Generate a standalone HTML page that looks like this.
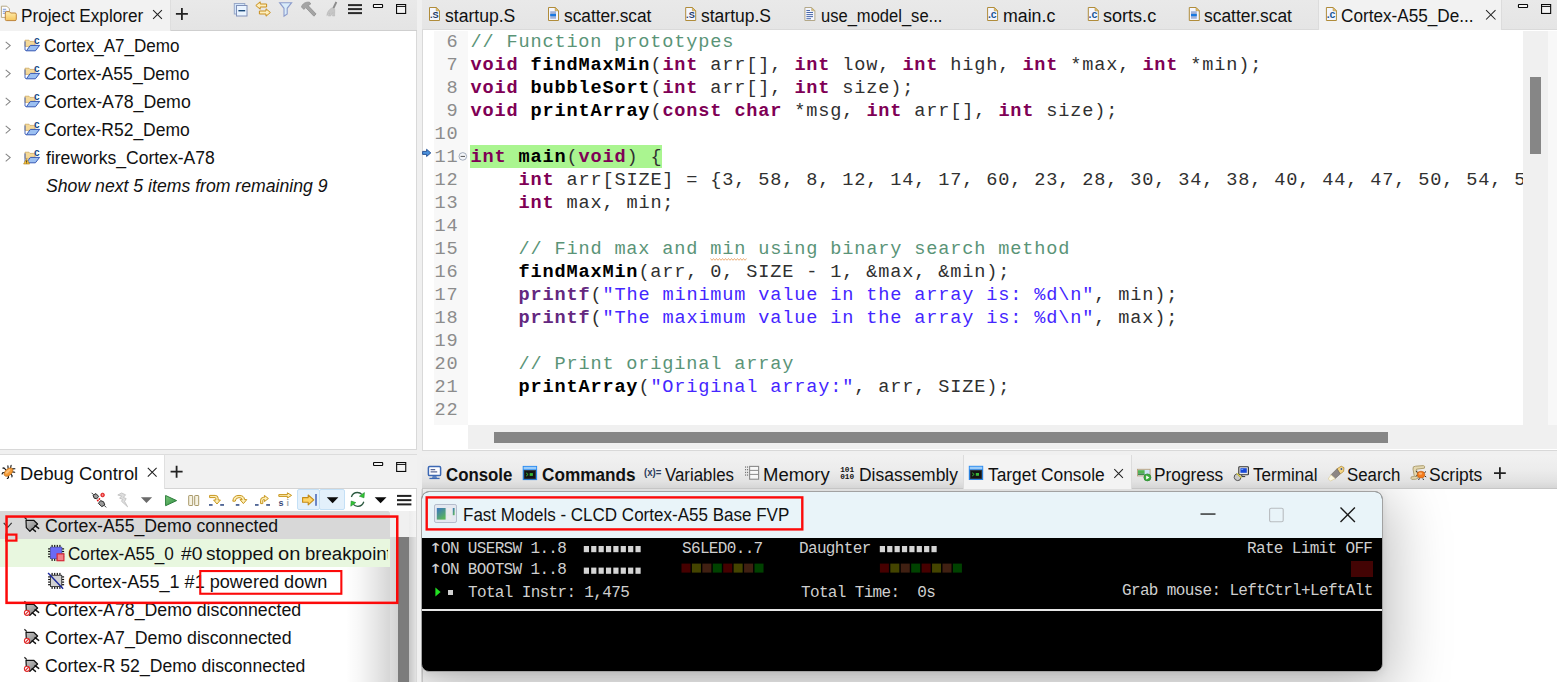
<!DOCTYPE html>
<html>
<head>
<meta charset="utf-8">
<title>IDE</title>
<style>
*{box-sizing:border-box;margin:0;padding:0}
html,body{width:1557px;height:682px;overflow:hidden;background:#f0f0f0}
body{position:relative;font-family:"Liberation Sans",sans-serif;color:#1a1a1a}
.abs{position:absolute}
.ui{position:absolute;white-space:nowrap;font-size:18px;line-height:22px;color:#111;transform-origin:0 50%;transform:scaleX(var(--k,1))}
.code{position:absolute;left:470.4px;white-space:pre;font-family:"Liberation Mono",monospace;font-size:18.6px;letter-spacing:0.84px;line-height:23px;height:23px;color:#303030;margin-top:0.5px}
.ln{position:absolute;left:422px;width:36.6px;text-align:right;white-space:pre;font-family:"Liberation Mono",monospace;font-size:18.6px;letter-spacing:0.84px;line-height:23px;height:23px;color:#8c8c8c;margin-top:0.5px}
.kw{color:#7f0055;font-weight:bold}
.fn{font-weight:bold;color:#000}
.cm{color:#5a9477}
.st{color:#4426ff}
.pf{color:#642880;font-weight:bold}
.lcd{position:absolute;white-space:pre;font-family:"Liberation Mono",monospace;font-size:16px;letter-spacing:-0.65px;line-height:17px;color:#cfcfcf}
.ar{position:absolute;left:-1.6px;top:-2.9px;width:8.95px;text-align:center;font-family:"DejaVu Sans Mono","Liberation Mono",monospace;font-size:17px;line-height:17px;letter-spacing:0;transform:scaleX(1.3)}
</style>
</head>
<body>

<!-- ============ LEFT TOP: Project Explorer ============ -->
<div class="abs" id="pe" style="left:0;top:0;width:417px;height:450px;background:#fff;border-right:1px solid #d9d9d9;border-bottom:1px solid #d8d8d8"></div>
<div class="abs" id="pe-bar" style="left:0;top:0;width:417px;height:31px;background:linear-gradient(180deg,#e9e9e9,#e4e4e4);border-bottom:1px solid #cfcfcf"></div>
<div class="abs" id="pe-tab" style="left:0;top:0;width:171px;height:31px;background:#f2f2f2;border-right:1px solid #dedede"></div>
<div class="ui" id="t-pe" style="left:21.24px;top:5px;--k:0.9554">Project Explorer</div>

<div class="ui" id="p1" style="left:44.48px;top:35px;--k:0.9473">Cortex_A7_Demo</div>
<div class="ui" id="p2" style="left:44.48px;top:63px;--k:0.9763">Cortex-A55_Demo</div>
<div class="ui" id="p3" style="left:44.49px;top:91px;--k:0.9844">Cortex-A78_Demo</div>
<div class="ui" id="p4" style="left:44.49px;top:119px;--k:0.9713">Cortex-R52_Demo</div>
<div class="ui" id="p5" style="left:45.50px;top:147px;--k:0.9750">fireworks_Cortex-A78</div>
<div class="ui" id="p6" style="left:45.50px;top:175px;font-style:italic;--k:0.9808">Show next 5 items from remaining 9</div>

<!-- ============ LEFT BOTTOM: Debug Control ============ -->
<div class="abs" id="dc" style="left:0;top:455px;width:417px;height:227px;background:#fff;border-right:1px solid #d9d9d9"></div>
<div class="abs" id="dc-bar" style="left:0;top:454px;width:417px;height:35px;background:#f1f1f1;border-bottom:1px solid #d4d4d4;border-top:1px solid #dcdcdc"></div>
<div class="abs" id="dc-tab" style="left:0;top:454px;width:165px;height:35px;background:#fff;border-right:1px solid #e0e0e0;border-top:1px solid #dcdcdc"></div>
<div class="ui" id="t-dc" style="left:20.09px;top:463px;--k:1.0178">Debug Control</div>

<div class="abs" id="d-shadow" style="left:346px;top:537px;width:44px;height:145px;background:linear-gradient(90deg,rgba(0,0,0,0) 0%,rgba(0,0,0,0.03) 30%,rgba(0,0,0,0.09) 65%,rgba(0,0,0,0.16) 100%)"></div>
<div class="abs" id="d-track1" style="left:389.8px;top:537px;width:9px;height:145px;background:linear-gradient(90deg,#dedede,#d2d2d2)"></div>
<div class="abs" id="d-track0" style="left:389.5px;top:511px;width:19.3px;height:26px;background:#f0f0f0"></div>
<div class="abs" id="d-thumb" style="left:398.4px;top:537px;width:10.4px;height:145px;background:#7c7c7c"></div>
<div class="abs" id="d-track" style="left:408.8px;top:511px;width:7.4px;height:171px;background:linear-gradient(90deg,#ececec,#f4f4f4)"></div>
<div class="abs" id="d-track2" style="left:408.8px;top:537px;width:7.4px;height:145px;background:linear-gradient(90deg,#c6c6c6,#e2e2e2)"></div>
<div class="abs" id="d-sel" style="left:0;top:511.3px;width:389.8px;height:27.5px;background:#d8d8d8;border-radius:0 2px 2px 0"></div>
<div class="abs" id="d-grn" style="left:0;top:539px;width:389.5px;height:27.8px;background:#e8f7df"></div>
<div class="ui" id="d1" style="left:44.80px;top:515px;--k:0.9830">Cortex-A55_Demo connected</div>
<div class="abs" id="d2clip" style="left:0;top:539px;width:388.2px;height:28px;overflow:hidden"><div class="ui" id="d2a" style="left:68.45px;top:4px;--k:0.9519">Cortex-A55_0</div><div class="ui" id="d2b" style="left:180.72px;top:4px;--k:1.0713">#0</div><div class="ui" id="d2c" style="left:206.14px;top:4px;--k:1.0566">stopped</div><div class="ui" id="d2d" style="left:278.38px;top:4px;--k:1.1174">on</div><div class="ui" id="d2e" style="left:304.7px;top:4px;--k:1.032">breakpoint</div></div>
<div class="ui" id="d3" style="left:68.49px;top:571px;--k:1.0044">Cortex-A55_1 #1 powered down</div>
<div class="ui" id="d4" style="left:44.80px;top:599px;--k:0.9849">Cortex-A78_Demo disconnected</div>
<div class="ui" id="d5" style="left:44.80px;top:627px;--k:0.9859">Cortex-A7_Demo disconnected</div>
<div class="ui" id="d6" style="left:44.80px;top:655px;--k:0.9778">Cortex-R 52_Demo disconnected</div>

<!-- ============ EDITOR ============ -->
<div class="abs" id="ed" style="left:422px;top:0;width:1135px;height:451px;background:#fff;border-left:1px solid #d9d9d9;border-bottom:1px solid #d8d8d8"></div>
<div class="abs" id="ed-bar" style="left:422px;top:0;width:1135px;height:30px;background:linear-gradient(180deg,#e9e9e9,#e5e5e5);border-bottom:1px solid #dadada"></div>
<div class="abs" id="ed-tab" style="left:1318px;top:0;width:184px;height:30px;background:#f2f2f2;border-left:1px solid #dcdcdc;border-right:1px solid #dcdcdc"></div>


<div class="ui" id="e1" style="left:444.56px;top:5px;--k:0.9765">startup.S</div>
<div class="ui" id="e2" style="left:563.59px;top:5px;--k:0.9602">scatter.scat</div>
<div class="ui" id="e3" style="left:700.96px;top:5px;--k:0.9710">startup.S</div>
<div class="ui" id="e4" style="left:820.55px;top:5px;--k:0.9190">use_model_se...</div>
<div class="ui" id="e5" style="left:1003.30px;top:5px;--k:0.9866">main.c</div>
<div class="ui" id="e6" style="left:1103.16px;top:5px;--k:1.0029">sorts.c</div>
<div class="ui" id="e7" style="left:1204.17px;top:5px;--k:0.9659">scatter.scat</div>
<div class="ui" id="e8" style="left:1341.48px;top:5px;--k:0.9531">Cortex-A55_De...</div>

<!-- gutter + scrollbars -->
<div class="abs" id="gut" style="left:434px;top:31px;width:34px;height:394px;background:#f8f8f8"></div>
<div class="abs" id="vtrack" style="left:1523px;top:31px;width:25px;height:394px;background:#f0f0f0"></div>
<div class="abs" id="vright" style="left:1548px;top:31px;width:9px;height:394px;background:#f8f8f8"></div>
<div class="abs" id="vthumb" style="left:1530px;top:77px;width:11px;height:77px;background:#868686"></div>
<div class="abs" id="htrack" style="left:468px;top:425px;width:1089px;height:24px;background:#f0f0f0"></div>
<div class="abs" id="hthumb" style="left:494px;top:432px;width:894px;height:11px;background:#868686"></div>
<div class="abs" id="hl" style="left:470px;top:145px;width:192px;height:23px;background:#aaf590"></div>
<div class="abs" id="codeclip" style="left:0;top:30px;width:1523px;height:395px;overflow:hidden">
<div class="ln" style="top:0px">6</div><div class="code" style="top:0px"><span class="cm">// Function prototypes</span></div>
<div class="ln" style="top:23px">7</div><div class="code" style="top:23px"><span class="kw">void</span> <span class="fn">findMaxMin</span>(<span class="kw">int</span> arr[], <span class="kw">int</span> low, <span class="kw">int</span> high, <span class="kw">int</span> *max, <span class="kw">int</span> *min);</div>
<div class="ln" style="top:46px">8</div><div class="code" style="top:46px"><span class="kw">void</span> <span class="fn">bubbleSort</span>(<span class="kw">int</span> arr[], <span class="kw">int</span> size);</div>
<div class="ln" style="top:69px">9</div><div class="code" style="top:69px"><span class="kw">void</span> <span class="fn">printArray</span>(<span class="kw">const</span> <span class="kw">char</span> *msg, <span class="kw">int</span> arr[], <span class="kw">int</span> size);</div>
<div class="ln" style="top:92px">10</div>
<div class="ln" style="top:115px">11</div><div class="code" style="top:115px"><span class="kw">int</span> <span class="fn">main</span>(<span class="kw">void</span>) {</div>
<div class="ln" style="top:138px">12</div><div class="code" style="top:138px">    <span class="kw">int</span> arr[SIZE] = {3, 58, 8, 12, 14, 17, 60, 23, 28, 30, 34, 38, 40, 44, 47, 50, 54, 57,</div>
<div class="ln" style="top:161px">13</div><div class="code" style="top:161px">    <span class="kw">int</span> max, min;</div>
<div class="ln" style="top:184px">14</div>
<div class="ln" style="top:207px">15</div><div class="code" style="top:207px">    <span class="cm">// Find max and min using binary search method</span></div>
<div class="ln" style="top:230px">16</div><div class="code" style="top:230px">    <span class="fn">findMaxMin</span>(arr, 0, SIZE - 1, &amp;max, &amp;min);</div>
<div class="ln" style="top:253px">17</div><div class="code" style="top:253px">    <span class="pf">printf</span>(<span class="st">"The minimum value in the array is: %d\n"</span>, min);</div>
<div class="ln" style="top:276px">18</div><div class="code" style="top:276px">    <span class="pf">printf</span>(<span class="st">"The maximum value in the array is: %d\n"</span>, max);</div>
<div class="ln" style="top:299px">19</div>
<div class="ln" style="top:322px">20</div><div class="code" style="top:322px">    <span class="cm">// Print original array</span></div>
<div class="ln" style="top:345px">21</div><div class="code" style="top:345px">    <span class="fn">printArray</span>(<span class="st">"Original array:"</span>, arr, SIZE);</div>
<div class="ln" style="top:368px">22</div>
</div>

<!-- ============ BOTTOM RIGHT ============ -->
<div class="abs" id="bt" style="left:422px;top:455px;width:1135px;height:227px;background:#fff;border-left:1px solid #d9d9d9"></div>
<div class="abs" id="bt-bar" style="left:422px;top:455px;width:1135px;height:34px;background:linear-gradient(180deg,#f1f1f1 0%,#ececec 45%,#e2e2e2 80%,#d6d6d6 100%);border-bottom:1px solid #c6c6c6"></div>


<div class="abs" id="bt-tab" style="left:963.4px;top:455px;width:168.4px;height:34px;background:#f3f3f3;border-left:1px solid #dcdcdc;border-right:1px solid #dcdcdc"></div>
<div class="ui" id="b1" style="left:445.60px;top:464px;font-weight:bold;--k:0.9352">Console</div>
<div class="ui" id="b2" style="left:542.00px;top:464px;font-weight:bold;--k:0.9552">Commands</div>
<div class="ui" id="b3" style="left:665.29px;top:464px;--k:0.9349">Variables</div>
<div class="ui" id="b4" style="left:762.88px;top:464px;--k:1.0267">Memory</div>
<div class="ui" id="b5" style="left:859.33px;top:464px;--k:0.9701">Disassembly</div>
<div class="ui" id="b6" style="left:987.90px;top:464px;--k:0.9638">Target Console</div>
<div class="ui" id="b7" style="left:1153.93px;top:464px;--k:0.9618">Progress</div>
<div class="ui" id="b8" style="left:1252.90px;top:464px;--k:0.9506">Terminal</div>
<div class="ui" id="b9" style="left:1346.59px;top:464px;--k:0.9359">Search</div>
<div class="ui" id="b10" style="left:1428.98px;top:464px;--k:0.9683">Scripts</div>

<!-- Fast Models window -->
<div class="abs" id="fm-shclip" style="left:421px;top:489px;width:1136px;height:193px;overflow:hidden"><div class="abs" style="left:0px;top:2.4px;width:962px;height:181px;border-radius:8px;box-shadow:0 14px 60px 8px rgba(0,0,0,0.27),0 2px 8px rgba(0,0,0,0.08)"></div></div>
<div class="abs" id="fm" style="left:421px;top:491.4px;width:962px;height:181px;border-radius:8px;background:#000;overflow:hidden;border:1px solid #a2a2a2">
  <div class="abs" id="fm-title" style="left:-1px;top:-1px;width:963px;height:46.6px;background:#e9f4f9"></div>
  <div class="abs" id="fm-line" style="left:-1px;top:116.2px;width:963px;height:2.2px;background:#e6e6e6"></div>
</div>
<div class="ui" id="fmt" style="left:463.36px;top:504.2px;--k:0.9454">Fast Models - CLCD Cortex-A55 Base FVP</div>

<div class="lcd" id="l1" style="left:432px;padding-left:8.95px;top:540.6px"><span class="ar">↑</span>ON USERSW 1..8</div>
<div class="lcd" id="l2" style="left:432px;padding-left:8.95px;top:561.7px"><span class="ar">↑</span>ON BOOTSW 1..8</div>
<div class="lcd" id="l3" style="left:468px;top:584.6px">Total Instr: 1,475</div>
<div class="lcd" id="l4" style="left:682px;top:540.6px">S6LED0..7</div>
<div class="lcd" id="l5" style="left:799px;top:540.6px">Daughter</div>
<div class="lcd" id="l6" style="left:801px;top:584.6px">Total Time:  0s</div>
<div class="lcd" id="l7" style="left:1247px;top:540.6px">Rate Limit OFF</div>
<div class="lcd" id="l8" style="left:1122px;top:582.6px">Grab mouse: LeftCtrl+LeftAlt</div>

<!--ICONS-->
<svg class="abs" style="left:429px;top:7px;overflow:visible" width="12" height="15" viewBox="0 0 12 15" ><path d="M0.5,0.5H7.2L10.5,3.8V13.5H0.5Z" fill="#f3f6ff" stroke="#b08c3a"/><path d="M7.2,0.5V3.8H10.5Z" fill="#e6c46e" stroke="#b08c3a" stroke-width="0.6"/><text x="0.9" y="11.4" font-family="Liberation Sans,sans-serif" font-weight="bold" font-size="9.2" fill="#1c3a68">.S</text></svg>
<svg class="abs" style="left:548px;top:7px;overflow:visible" width="12" height="15" viewBox="0 0 12 15" ><path d="M0.5,0.5H7.2L10.5,3.8V13.5H0.5Z" fill="#f3f6ff" stroke="#b08c3a"/><path d="M7.2,0.5V3.8H10.5Z" fill="#e6c46e" stroke="#b08c3a" stroke-width="0.6"/><rect x="2.2" y="4.2" width="5.8" height="7.6" fill="#a3b2d8"/><rect x="2.2" y="6.9" width="5.8" height="2.3" fill="#1878e0"/></svg>
<svg class="abs" style="left:685px;top:7px;overflow:visible" width="12" height="15" viewBox="0 0 12 15" ><g transform="translate(0.2,0)"><path d="M0.5,0.5H7.2L10.5,3.8V13.5H0.5Z" fill="#f3f6ff" stroke="#b08c3a"/><path d="M7.2,0.5V3.8H10.5Z" fill="#e6c46e" stroke="#b08c3a" stroke-width="0.6"/><text x="0.9" y="11.4" font-family="Liberation Sans,sans-serif" font-weight="bold" font-size="9.2" fill="#1c3a68">.S</text></g></svg>
<svg class="abs" style="left:804px;top:7px;overflow:visible" width="12" height="15" viewBox="0 0 12 15" ><g transform="translate(0.4,0)"><path d="M0.5,0.5H7.2L10.5,3.8V13.5H0.5Z" fill="#f3f6ff" stroke="#b4a888"/><path d="M7.2,0.5V3.8H10.5Z" fill="#dcc070" stroke="#b4a888" stroke-width="0.6"/><rect x="2" y="3" width="3.6" height="1" fill="#4a68a8"/><rect x="2" y="5" width="6.6" height="1" fill="#4a68a8"/><rect x="2" y="7.1" width="6.6" height="1" fill="#4a68a8"/><rect x="2" y="9.1" width="6.6" height="1" fill="#4a68a8"/><rect x="2" y="11.2" width="4.6" height="1" fill="#4a68a8"/></g></svg>
<svg class="abs" style="left:987px;top:7px;overflow:visible" width="12" height="15" viewBox="0 0 12 15" ><g transform="translate(0.1,0)"><path d="M0.5,0.5H7.2L10.5,3.8V13.5H0.5Z" fill="#f3f6ff" stroke="#b08c3a"/><path d="M7.2,0.5V3.8H10.5Z" fill="#e6c46e" stroke="#b08c3a" stroke-width="0.6"/><text x="0.8" y="11.2" font-family="Liberation Sans,sans-serif" font-weight="bold" font-size="10.5" fill="#1d5896">.c</text></g></svg>
<svg class="abs" style="left:1087px;top:7px;overflow:visible" width="12" height="15" viewBox="0 0 12 15" ><g transform="translate(0.8,0)"><path d="M0.5,0.5H7.2L10.5,3.8V13.5H0.5Z" fill="#f3f6ff" stroke="#b08c3a"/><path d="M7.2,0.5V3.8H10.5Z" fill="#e6c46e" stroke="#b08c3a" stroke-width="0.6"/><text x="0.8" y="11.2" font-family="Liberation Sans,sans-serif" font-weight="bold" font-size="10.5" fill="#1d5896">.c</text></g></svg>
<svg class="abs" style="left:1188px;top:7px;overflow:visible" width="12" height="15" viewBox="0 0 12 15" ><g transform="translate(0.8,0)"><path d="M0.5,0.5H7.2L10.5,3.8V13.5H0.5Z" fill="#f3f6ff" stroke="#b08c3a"/><path d="M7.2,0.5V3.8H10.5Z" fill="#e6c46e" stroke="#b08c3a" stroke-width="0.6"/><rect x="2.2" y="4.2" width="5.8" height="7.6" fill="#a3b2d8"/><rect x="2.2" y="6.9" width="5.8" height="2.3" fill="#1878e0"/></g></svg>
<svg class="abs" style="left:1325px;top:7px;overflow:visible" width="12" height="15" viewBox="0 0 12 15" ><g transform="translate(0.9,0)"><path d="M0.5,0.5H7.2L10.5,3.8V13.5H0.5Z" fill="#f3f6ff" stroke="#b08c3a"/><path d="M7.2,0.5V3.8H10.5Z" fill="#e6c46e" stroke="#b08c3a" stroke-width="0.6"/><text x="0.8" y="11.2" font-family="Liberation Sans,sans-serif" font-weight="bold" font-size="10.5" fill="#1d5896">.c</text></g></svg>
<svg class="abs" style="left:152px;top:9px;overflow:visible" width="11" height="11" viewBox="0 0 11 11" ><g transform="translate(0.8,0.8)"><path d="M0.3,0.3L9.1,9.1M9.1,0.3L0.3,9.1" stroke="#222" stroke-width="1.05" fill="none"/></g></svg>
<svg class="abs" style="left:175px;top:7px;overflow:visible" width="13" height="13" viewBox="0 0 13 13" ><g transform="translate(0.9,0.9)"><path d="M6.0,0V12M0,6.0H12" stroke="#222" stroke-width="1.8" fill="none"/></g></svg>
<svg class="abs" style="left:147px;top:467px;overflow:visible" width="10" height="11" viewBox="0 0 10 11" ><g transform="translate(0.5,0.6)"><path d="M0.3,0.3L9.1,9.1M9.1,0.3L0.3,9.1" stroke="#222" stroke-width="1.05" fill="none"/></g></svg>
<svg class="abs" style="left:170px;top:465px;overflow:visible" width="13" height="13" viewBox="0 0 13 13" ><g transform="translate(0.6,0.7)"><path d="M6.0,0V12M0,6.0H12" stroke="#222" stroke-width="1.8" fill="none"/></g></svg>
<svg class="abs" style="left:1485px;top:9px;overflow:visible" width="11" height="11" viewBox="0 0 11 11" ><g transform="translate(0.8,0.8)"><path d="M0.3,0.3L9.7,9.7M9.7,0.3L0.3,9.7" stroke="#222" stroke-width="1.05" fill="none"/></g></svg>
<svg class="abs" style="left:1114px;top:468px;overflow:visible" width="10" height="11" viewBox="0 0 10 11" ><g transform="translate(0,0.9)"><path d="M0.3,0.3L8.899999999999999,8.899999999999999M8.899999999999999,0.3L0.3,8.899999999999999" stroke="#222" stroke-width="1.05" fill="none"/></g></svg>
<svg class="abs" style="left:1494px;top:467px;overflow:visible" width="12" height="13" viewBox="0 0 12 13" ><g transform="translate(0,0.2)"><path d="M5.9,0V11.8M0,5.9H11.8" stroke="#222" stroke-width="1.8" fill="none"/></g></svg>
<svg class="abs" style="left:372px;top:4px;overflow:visible" width="12" height="5" viewBox="0 0 12 5" ><g transform="translate(0.9,0)"><rect x="0.55" y="0.55" width="9.1" height="2.9" rx="0.5" fill="#f4f4f4" stroke="#0a0a0a" stroke-width="1.1"/></g></svg>
<svg class="abs" style="left:396px;top:4px;overflow:visible" width="11" height="11" viewBox="0 0 11 11" ><rect x="0.55" y="0.55" width="9.1" height="8.9" fill="#f4f4f4" stroke="#0a0a0a" stroke-width="1.1"/><rect x="0.5" y="2" width="9.2" height="0.9" fill="#0a0a0a"/></svg>
<svg class="abs" style="left:373px;top:462px;overflow:visible" width="11" height="5" viewBox="0 0 11 5" ><rect x="0.55" y="0.55" width="9.1" height="2.9" rx="0.5" fill="#f4f4f4" stroke="#0a0a0a" stroke-width="1.1"/></svg>
<svg class="abs" style="left:396px;top:462px;overflow:visible" width="11" height="11" viewBox="0 0 11 11" ><g transform="translate(0.1,0)"><rect x="0.55" y="0.55" width="9.1" height="8.9" fill="#f4f4f4" stroke="#0a0a0a" stroke-width="1.1"/><rect x="0.5" y="2" width="9.2" height="0.9" fill="#0a0a0a"/></g></svg>
<svg class="abs" style="left:1517px;top:4px;overflow:visible" width="12" height="5" viewBox="0 0 12 5" ><g transform="translate(0.9,0)"><rect x="0.55" y="0.55" width="9.1" height="2.9" rx="0.5" fill="#f4f4f4" stroke="#0a0a0a" stroke-width="1.1"/></g></svg>
<svg class="abs" style="left:1541px;top:4px;overflow:visible" width="11" height="11" viewBox="0 0 11 11" ><rect x="0.55" y="0.55" width="9.1" height="8.9" fill="#f4f4f4" stroke="#0a0a0a" stroke-width="1.1"/><rect x="0.5" y="2" width="9.2" height="0.9" fill="#0a0a0a"/></svg>
<svg class="abs" style="left:233px;top:3px;overflow:visible" width="15" height="14" viewBox="0 0 15 14" ><g transform="translate(0.8,0)"><rect x="0.5" y="0.5" width="10.5" height="10.5" fill="#d4e6fa" stroke="#98a8c8"/><rect x="2.7" y="2.5" width="10.5" height="10.5" fill="#eaf4ff" stroke="#8090b8"/><rect x="4.6" y="7" width="6.8" height="1.4" fill="#1a4a7a"/></g></svg>
<svg class="abs" style="left:255px;top:1px;overflow:visible" width="17" height="17" viewBox="0 0 17 17" ><path d="M0.8,4.5L5.2,0.8V3H11.6V6H5.2V8.2Z" fill="#fdeebc" stroke="#c98f1e" stroke-width="1"/><path d="M15.4,11.5L11,7.8V10H4.4V13H11V15.2Z" fill="#fdeebc" stroke="#c98f1e" stroke-width="1"/></svg>
<svg class="abs" style="left:279px;top:2px;overflow:visible" width="15" height="16" viewBox="0 0 15 16" ><path d="M0.6,0.7H12.6L8.2,6.3V12L5,14.2V6.3Z" fill="#d9ecfa" stroke="#8c9ccc" stroke-width="1.1"/></svg>
<svg class="abs" style="left:300px;top:1px;overflow:visible" width="18" height="17" viewBox="0 0 18 17" ><g transform="translate(0.5,0)"><path d="M1,6C2,2.5 5,0.8 9,1.2L10.2,3L7.6,4.6L15.6,13L13.4,15.2L5.2,6.6L3.4,8.4Z" fill="#a4a4a4" stroke="#8e8e8e" stroke-width="0.8"/></g></svg>
<svg class="abs" style="left:326px;top:1px;overflow:visible" width="13" height="17" viewBox="0 0 13 17" ><path d="M9.5,0.6L11.2,1.6L8.2,7.8L6.4,7Z" fill="#8c8c8c"/><path d="M5.8,7L8.8,8.4L8.6,15H6.6L6.8,11.5L4.6,15H2.4L3.8,12L0.8,14.6C1.2,10.8 3.2,8.2 5.8,7Z" fill="#c6c6c6" stroke="#b0b0b0" stroke-width="0.5"/></svg>
<svg class="abs" style="left:348px;top:4px;overflow:visible" width="15" height="11" viewBox="0 0 15 11" ><g transform="translate(0,0.1)"><rect x="0" y="0.0" width="14" height="2" fill="#2a2a2a"/><rect x="0" y="4.0" width="14" height="2" fill="#2a2a2a"/><rect x="0" y="8.0" width="14" height="2" fill="#2a2a2a"/></g></svg>
<svg class="abs" style="left:0px;top:5px;overflow:visible" width="17" height="17" viewBox="0 0 17 17" ><g transform="translate(0.8,0.6)"><path d="M0.6,0.6H6L8.6,3.2V11.8H0.6Z" fill="#fdfdff" stroke="#b0a078" stroke-width="0.9"/><rect x="2" y="3.2" width="3.4" height="0.9" fill="#6a8ad0"/><rect x="2" y="5.2" width="4.6" height="0.9" fill="#6a8ad0"/><rect x="2" y="7.2" width="3" height="0.9" fill="#6a8ad0"/><defs><linearGradient id="gfo" x1="0" y1="0" x2="0" y2="1"><stop offset="0" stop-color="#ffeeb0"/><stop offset="1" stop-color="#f6c65e"/></linearGradient></defs><path d="M4.5,7.4Q4.5,6 5.8,6H8.6L9.8,7.4H14.2Q15.5,7.4 15.5,8.6V13.8Q15.5,15 14.2,15H5.8Q4.5,15 4.5,13.8Z" fill="url(#gfo)" stroke="#b87a2e" stroke-width="0.9"/></g></svg>
<svg class="abs" style="left:5px;top:41px;overflow:visible" width="7" height="9" viewBox="0 0 7 9" ><g transform="translate(0.2,0.4)"><path d="M0.5,0.4L5,4.2L0.5,8" fill="none" stroke="#858585" stroke-width="1.05"/></g></svg>
<svg class="abs" style="left:24px;top:38px;overflow:visible" width="17" height="15" viewBox="0 0 17 15" ><g transform="translate(0,0.4)"><path d="M1,1.8H5L6,3H11V8H1Z" fill="#f5d998" stroke="#c8a45a" stroke-width="0.7"/><path d="M2.4,12.4H11.4L15.6,7H6.4Z" fill="#9cc0f2" stroke="#3558b4" stroke-width="1" stroke-linejoin="round"/><path d="M1,3V11.6L2.4,12.4" fill="none" stroke="#3558b4" stroke-width="0.9"/><text x="9.9" y="5.8" font-family="Liberation Sans,sans-serif" font-weight="bold" font-size="10" fill="#174a86">c</text></g></svg>
<svg class="abs" style="left:5px;top:69px;overflow:visible" width="7" height="9" viewBox="0 0 7 9" ><g transform="translate(0.2,0.4)"><path d="M0.5,0.4L5,4.2L0.5,8" fill="none" stroke="#858585" stroke-width="1.05"/></g></svg>
<svg class="abs" style="left:24px;top:66px;overflow:visible" width="17" height="15" viewBox="0 0 17 15" ><g transform="translate(0,0.4)"><path d="M1,1.8H5L6,3H11V8H1Z" fill="#f5d998" stroke="#c8a45a" stroke-width="0.7"/><path d="M2.4,12.4H11.4L15.6,7H6.4Z" fill="#9cc0f2" stroke="#3558b4" stroke-width="1" stroke-linejoin="round"/><path d="M1,3V11.6L2.4,12.4" fill="none" stroke="#3558b4" stroke-width="0.9"/><text x="9.9" y="5.8" font-family="Liberation Sans,sans-serif" font-weight="bold" font-size="10" fill="#174a86">c</text></g></svg>
<svg class="abs" style="left:5px;top:97px;overflow:visible" width="7" height="9" viewBox="0 0 7 9" ><g transform="translate(0.2,0.4)"><path d="M0.5,0.4L5,4.2L0.5,8" fill="none" stroke="#858585" stroke-width="1.05"/></g></svg>
<svg class="abs" style="left:24px;top:94px;overflow:visible" width="17" height="15" viewBox="0 0 17 15" ><g transform="translate(0,0.4)"><path d="M1,1.8H5L6,3H11V8H1Z" fill="#f5d998" stroke="#c8a45a" stroke-width="0.7"/><path d="M2.4,12.4H11.4L15.6,7H6.4Z" fill="#9cc0f2" stroke="#3558b4" stroke-width="1" stroke-linejoin="round"/><path d="M1,3V11.6L2.4,12.4" fill="none" stroke="#3558b4" stroke-width="0.9"/><text x="9.9" y="5.8" font-family="Liberation Sans,sans-serif" font-weight="bold" font-size="10" fill="#174a86">c</text></g></svg>
<svg class="abs" style="left:5px;top:125px;overflow:visible" width="7" height="9" viewBox="0 0 7 9" ><g transform="translate(0.2,0.4)"><path d="M0.5,0.4L5,4.2L0.5,8" fill="none" stroke="#858585" stroke-width="1.05"/></g></svg>
<svg class="abs" style="left:24px;top:122px;overflow:visible" width="17" height="15" viewBox="0 0 17 15" ><g transform="translate(0,0.4)"><path d="M1,1.8H5L6,3H11V8H1Z" fill="#f5d998" stroke="#c8a45a" stroke-width="0.7"/><path d="M2.4,12.4H11.4L15.6,7H6.4Z" fill="#9cc0f2" stroke="#3558b4" stroke-width="1" stroke-linejoin="round"/><path d="M1,3V11.6L2.4,12.4" fill="none" stroke="#3558b4" stroke-width="0.9"/><text x="9.9" y="5.8" font-family="Liberation Sans,sans-serif" font-weight="bold" font-size="10" fill="#174a86">c</text></g></svg>
<svg class="abs" style="left:5px;top:153px;overflow:visible" width="7" height="9" viewBox="0 0 7 9" ><g transform="translate(0.2,0.4)"><path d="M0.5,0.4L5,4.2L0.5,8" fill="none" stroke="#858585" stroke-width="1.05"/></g></svg>
<svg class="abs" style="left:24px;top:150px;overflow:visible" width="17" height="15" viewBox="0 0 17 15" ><g transform="translate(0,0.4)"><path d="M1,1.8H5L6,3H11V8H1Z" fill="#f5d998" stroke="#c8a45a" stroke-width="0.7"/><path d="M2.4,12.4H11.4L15.6,7H6.4Z" fill="#9cc0f2" stroke="#3558b4" stroke-width="1" stroke-linejoin="round"/><path d="M1,3V11.6L2.4,12.4" fill="none" stroke="#3558b4" stroke-width="0.9"/><text x="9.9" y="5.8" font-family="Liberation Sans,sans-serif" font-weight="bold" font-size="10" fill="#174a86">c</text><path d="M2.6,8.2L5.6,13.6H-0.4Z" fill="#f6c23a" stroke="#a87818" stroke-width="0.6"/><rect x="2.25" y="10" width="0.8" height="2" fill="#222"/><rect x="2.25" y="12.3" width="0.8" height="0.7" fill="#222"/></g></svg>
<svg class="abs" style="left:1px;top:464px;overflow:visible" width="16" height="16" viewBox="0 0 16 16" ><g transform="translate(0.5,0.5)"><g stroke="#111" stroke-width="1.1" fill="none" stroke-linecap="round"><path d="M6.6,3.6L6.4,1.2M9.2,3L9.6,0.8M10.8,4.4L13.4,4.2M11,7.4L13.2,7.8M4.4,5.4L2.4,3.4L1.4,3.6M3.4,8L1.2,8.2L0.6,9.4M6.8,11.4L7,13.2L5.8,14M9.4,9.6L10.6,11.2L10.4,12.4"/></g><ellipse cx="7" cy="7.6" rx="5.2" ry="3.1" transform="rotate(-42 7 7.6)" fill="#f59a34" stroke="#b86a18" stroke-width="0.7"/><ellipse cx="6.4" cy="6.8" rx="3.2" ry="1.2" transform="rotate(-42 6.4 6.8)" fill="#fbc888" opacity="0.8"/></g></svg>
<svg class="abs" style="left:91px;top:492px;overflow:visible" width="17" height="17" viewBox="0 0 17 17" ><path d="M0.6,0.8L2.4,2.6" stroke="#333" stroke-width="1"/><path d="M2,3.2L5,1.6L7.6,4.4L5.8,6.8L3.2,6.2Z" fill="#9a9a9a" stroke="#2a2a2a" stroke-width="1"/><path d="M15.2,15.4L13.4,13.6" stroke="#333" stroke-width="1"/><path d="M13.8,13L10.8,14.6L7.4,11.4L9.6,8.6L12.6,9.8Z" fill="#9a9a9a" stroke="#2a2a2a" stroke-width="1"/><circle cx="6.8" cy="8.6" r="1" fill="#e81818"/><circle cx="8.4" cy="7" r="0.9" fill="#e81818"/><circle cx="11.6" cy="3" r="1.9" fill="#f04040" stroke="#d01010" stroke-width="0.6"/><circle cx="11.6" cy="3" r="0.7" fill="#ffb0b0"/></svg>
<svg class="abs" style="left:117px;top:492px;overflow:visible" width="13" height="16" viewBox="0 0 13 16" ><g transform="translate(0,0.4)"><path d="M4.6,0.6L8.6,2.4L6.4,5L9.2,6.2L7.6,9L10.6,14.4L4.4,8.8L5.8,7L2.6,5.8L4.6,3.6L0.8,2.6Z" fill="#dedede" stroke="#bcbcbc" stroke-width="0.8"/></g></svg>
<svg class="abs" style="left:140px;top:497px;overflow:visible" width="13" height="6" viewBox="0 0 13 6" ><g transform="translate(0.9,0.3)"><path d="M0,0H11.2L5.6,5.6Z" fill="#6a6a6a"/></g></svg>
<svg class="abs" style="left:165px;top:494px;overflow:visible" width="13" height="13" viewBox="0 0 13 13" ><g transform="translate(0,0.8)"><defs><linearGradient id="gpl" x1="0" y1="0" x2="1" y2="1"><stop offset="0" stop-color="#7cc87c"/><stop offset="1" stop-color="#2c8c3c"/></linearGradient></defs><path d="M0.6,0.7L11.6,5.8L0.6,10.9Z" fill="url(#gpl)" stroke="#2c7c3c" stroke-width="1" stroke-linejoin="round"/></g></svg>
<svg class="abs" style="left:188px;top:495px;overflow:visible" width="12" height="12" viewBox="0 0 12 12" ><g transform="translate(0.2,0)"><rect x="0.5" y="0.5" width="4" height="10" rx="0.6" fill="#f6f2e2" stroke="#a89868"/><rect x="6.5" y="0.5" width="4" height="10" rx="0.6" fill="#f6f2e2" stroke="#a89868"/></g></svg>
<svg class="abs" style="left:208px;top:494px;overflow:visible" width="17" height="13" viewBox="0 0 17 13" ><g transform="translate(0.8,0.6)"><path d="M0.8,0.8H6.4Q9.4,0.8 9.4,3.8V5.4H11.6L8.2,9.4L4.8,5.4H7V3.8Q7,3 6.2,3H0.8Z" fill="#fdeeb4" stroke="#c8961e" stroke-width="1" stroke-linejoin="round"/><rect x="0.2" y="9.6" width="3.6" height="1.5" fill="#28447e"/><rect x="11.4" y="9.6" width="3.8" height="1.5" fill="#28447e"/></g></svg>
<svg class="abs" style="left:232px;top:494px;overflow:visible" width="16" height="13" viewBox="0 0 16 13" ><g transform="translate(0,0.6)"><path d="M0.8,6.6Q1.2,0.8 7,0.8Q12.2,0.8 12.6,5H14.8L11.4,9L8,5H10.2Q9.8,3 7,3Q3.6,3 3.2,6.6Z" fill="#fdeeb4" stroke="#c8961e" stroke-width="1" stroke-linejoin="round"/><rect x="3.8" y="9.6" width="3.6" height="1.5" fill="#28447e"/></g></svg>
<svg class="abs" style="left:255px;top:494px;overflow:visible" width="16" height="13" viewBox="0 0 16 13" ><g transform="translate(0,0.6)"><path d="M5.6,9V5.6Q5.6,2.8 8.4,2.8H9.4V0.8L13.4,3.9L9.4,7V5H8.6Q7.8,5 7.8,5.8V9Z" fill="#fdeeb4" stroke="#c8961e" stroke-width="1" stroke-linejoin="round"/><rect x="0" y="9.6" width="3.6" height="1.5" fill="#28447e"/><rect x="11.2" y="9.6" width="3.8" height="1.5" fill="#28447e"/></g></svg>
<svg class="abs" style="left:278px;top:492px;overflow:visible" width="15" height="16" viewBox="0 0 15 16" ><path d="M0.8,2.6H9.4V0.8L13.6,3.4L9.4,6V4.4H0.8Z" fill="#fdeeb4" stroke="#c8961e" stroke-width="1" stroke-linejoin="round"/><text x="0.6" y="14.4" font-family="Liberation Sans,sans-serif" font-weight="bold" font-size="9" fill="#3a4878">s</text><text x="8.6" y="14.4" font-family="Liberation Sans,sans-serif" font-weight="bold" font-size="9" fill="#a8a8a8">i</text></svg>
<div class="abs" style="left:297px;top:489px;width:23px;height:21px;background:#e3f0fb;border:1px solid #c4e0f6;border-radius:2px"></div>
<div class="abs" style="left:319px;top:489px;width:26px;height:21px;background:#e3f0fb;border:1px solid #c4e0f6;border-radius:2px"></div>
<svg class="abs" style="left:301px;top:494px;overflow:visible" width="17" height="13" viewBox="0 0 17 13" ><g transform="translate(0.8,0)"><path d="M0.8,3.6H6.4V1L12,5.9L6.4,10.8V8.2H0.8Z" fill="#ffd566" stroke="#c48c18" stroke-width="1.1" stroke-linejoin="round"/><rect x="13.4" y="0" width="1.6" height="11.8" fill="#4e6cba"/></g></svg>
<svg class="abs" style="left:326px;top:497px;overflow:visible" width="13" height="7" viewBox="0 0 13 7" ><g transform="translate(0.8,0.3)"><path d="M0,0H11.6L5.8,6Z" fill="#0a0a0a"/></g></svg>
<svg class="abs" style="left:349px;top:491px;overflow:visible" width="17" height="17" viewBox="0 0 17 17" ><g transform="translate(0.8,0.6)"><g fill="none" stroke="#2c5a40" stroke-width="1.3"><path d="M1.6,5.4Q3,0.9 7.6,0.9Q10.4,0.9 12,2.8"/><path d="M14,10.2Q12.6,14.7 8,14.7Q5.2,14.7 3.6,12.8"/></g><path d="M14.6,1L14.2,6.2L9.6,4.6Z" fill="#34c634" stroke="#1c8c2c" stroke-width="0.6"/><path d="M1,14.6L1.4,9.4L6,11Z" fill="#34c634" stroke="#1c8c2c" stroke-width="0.6"/></g></svg>
<svg class="abs" style="left:374px;top:497px;overflow:visible" width="13" height="7" viewBox="0 0 13 7" ><g transform="translate(0.7,0.3)"><path d="M0,0H11.8L5.9,6Z" fill="#0a0a0a"/></g></svg>
<svg class="abs" style="left:397px;top:494px;overflow:visible" width="15" height="12" viewBox="0 0 15 12" ><g transform="translate(0,0.9)"><rect x="0" y="0.0" width="14.4" height="2" fill="#222"/><rect x="0" y="4.25" width="14.4" height="2" fill="#222"/><rect x="0" y="8.5" width="14.4" height="2" fill="#222"/></g></svg>
<svg class="abs" style="left:3px;top:522px;overflow:visible" width="10" height="6" viewBox="0 0 10 6" ><g transform="translate(0.3,0.3)"><path d="M0.4,0.5L4.4,5L8.4,0.5" fill="none" stroke="#333" stroke-width="1.1"/></g></svg>
<svg class="abs" style="left:24px;top:518px;overflow:visible" width="16" height="15" viewBox="0 0 16 15" ><g transform="translate(0.2,0.2)"><defs><linearGradient id="gpg" x1="0" y1="0" x2="1" y2="1"><stop offset="0" stop-color="#c4c4c4"/><stop offset="1" stop-color="#808080"/></linearGradient></defs><path d="M0.2,-0.9L2.5,1.3" stroke="#222" stroke-width="1.2"/><path d="M1.8,2.1H9.5L13.4,5.8L5.7,13.1L2.1,9.4Z" fill="url(#gpg)" stroke="#111" stroke-width="1.2" stroke-linejoin="round"/><path d="M10.9,7.4L14.5,10.2M8.1,10.6L11.3,13.2" stroke="#111" stroke-width="1.4" stroke-linecap="round"/></g></svg>
<svg class="abs" style="left:24px;top:602px;overflow:visible" width="16" height="15" viewBox="0 0 16 15" ><g transform="translate(0.2,0.2)"><defs><linearGradient id="gpg" x1="0" y1="0" x2="1" y2="1"><stop offset="0" stop-color="#c4c4c4"/><stop offset="1" stop-color="#808080"/></linearGradient></defs><path d="M0.2,-0.9L2.5,1.3" stroke="#222" stroke-width="1.2"/><path d="M1.8,2.1H9.5L13.4,5.8L5.7,13.1L2.1,9.4Z" fill="url(#gpg)" stroke="#111" stroke-width="1.2" stroke-linejoin="round"/><path d="M10.9,7.4L14.5,10.2M8.1,10.6L11.3,13.2" stroke="#111" stroke-width="1.4" stroke-linecap="round"/><circle cx="2.8" cy="10.6" r="2.6" fill="#fff" stroke="#e02828" stroke-width="1.1"/><path d="M1,12.4L4.6,8.8" stroke="#e02828" stroke-width="1.1"/></g></svg>
<svg class="abs" style="left:24px;top:630px;overflow:visible" width="16" height="15" viewBox="0 0 16 15" ><g transform="translate(0.2,0.2)"><defs><linearGradient id="gpg" x1="0" y1="0" x2="1" y2="1"><stop offset="0" stop-color="#c4c4c4"/><stop offset="1" stop-color="#808080"/></linearGradient></defs><path d="M0.2,-0.9L2.5,1.3" stroke="#222" stroke-width="1.2"/><path d="M1.8,2.1H9.5L13.4,5.8L5.7,13.1L2.1,9.4Z" fill="url(#gpg)" stroke="#111" stroke-width="1.2" stroke-linejoin="round"/><path d="M10.9,7.4L14.5,10.2M8.1,10.6L11.3,13.2" stroke="#111" stroke-width="1.4" stroke-linecap="round"/><circle cx="2.8" cy="10.6" r="2.6" fill="#fff" stroke="#e02828" stroke-width="1.1"/><path d="M1,12.4L4.6,8.8" stroke="#e02828" stroke-width="1.1"/></g></svg>
<svg class="abs" style="left:24px;top:658px;overflow:visible" width="16" height="15" viewBox="0 0 16 15" ><g transform="translate(0.2,0.2)"><defs><linearGradient id="gpg" x1="0" y1="0" x2="1" y2="1"><stop offset="0" stop-color="#c4c4c4"/><stop offset="1" stop-color="#808080"/></linearGradient></defs><path d="M0.2,-0.9L2.5,1.3" stroke="#222" stroke-width="1.2"/><path d="M1.8,2.1H9.5L13.4,5.8L5.7,13.1L2.1,9.4Z" fill="url(#gpg)" stroke="#111" stroke-width="1.2" stroke-linejoin="round"/><path d="M10.9,7.4L14.5,10.2M8.1,10.6L11.3,13.2" stroke="#111" stroke-width="1.4" stroke-linecap="round"/><circle cx="2.8" cy="10.6" r="2.6" fill="#fff" stroke="#e02828" stroke-width="1.1"/><path d="M1,12.4L4.6,8.8" stroke="#e02828" stroke-width="1.1"/></g></svg>
<svg class="abs" style="left:48px;top:544px;overflow:visible" width="17" height="17" viewBox="0 0 17 17" ><g transform="translate(0.1,0.9)"><rect x="3.4" y="0" width="1.2" height="2.2" fill="#111"/><rect x="3.4" y="13.8" width="1.2" height="2.2" fill="#111"/><rect x="0" y="3.4" width="2.2" height="1.2" fill="#111"/><rect x="13.8" y="3.4" width="2.2" height="1.2" fill="#111"/><rect x="6.0" y="0" width="1.2" height="2.2" fill="#111"/><rect x="6.0" y="13.8" width="1.2" height="2.2" fill="#111"/><rect x="0" y="6.0" width="2.2" height="1.2" fill="#111"/><rect x="13.8" y="6.0" width="2.2" height="1.2" fill="#111"/><rect x="8.6" y="0" width="1.2" height="2.2" fill="#111"/><rect x="8.6" y="13.8" width="1.2" height="2.2" fill="#111"/><rect x="0" y="8.6" width="2.2" height="1.2" fill="#111"/><rect x="13.8" y="8.6" width="2.2" height="1.2" fill="#111"/><rect x="11.200000000000001" y="0" width="1.2" height="2.2" fill="#111"/><rect x="11.200000000000001" y="13.8" width="1.2" height="2.2" fill="#111"/><rect x="0" y="11.200000000000001" width="2.2" height="1.2" fill="#111"/><rect x="13.8" y="11.200000000000001" width="2.2" height="1.2" fill="#111"/><rect x="2.2" y="2.2" width="11.6" height="11.6" fill="#6a6af6" stroke="#3a3a9a" stroke-width="0.6"/><rect x="9" y="9" width="6.8" height="6.8" fill="#f08088" stroke="#d82838" stroke-width="1.2"/></g></svg>
<svg class="abs" style="left:48px;top:572px;overflow:visible" width="17" height="17" viewBox="0 0 17 17" ><g transform="translate(0.1,0.9)"><rect x="3.4" y="0" width="1.2" height="2.2" fill="#111"/><rect x="3.4" y="13.8" width="1.2" height="2.2" fill="#111"/><rect x="0" y="3.4" width="2.2" height="1.2" fill="#111"/><rect x="13.8" y="3.4" width="2.2" height="1.2" fill="#111"/><rect x="6.0" y="0" width="1.2" height="2.2" fill="#111"/><rect x="6.0" y="13.8" width="1.2" height="2.2" fill="#111"/><rect x="0" y="6.0" width="2.2" height="1.2" fill="#111"/><rect x="13.8" y="6.0" width="2.2" height="1.2" fill="#111"/><rect x="8.6" y="0" width="1.2" height="2.2" fill="#111"/><rect x="8.6" y="13.8" width="1.2" height="2.2" fill="#111"/><rect x="0" y="8.6" width="2.2" height="1.2" fill="#111"/><rect x="13.8" y="8.6" width="2.2" height="1.2" fill="#111"/><rect x="11.200000000000001" y="0" width="1.2" height="2.2" fill="#111"/><rect x="11.200000000000001" y="13.8" width="1.2" height="2.2" fill="#111"/><rect x="0" y="11.200000000000001" width="2.2" height="1.2" fill="#111"/><rect x="13.8" y="11.200000000000001" width="2.2" height="1.2" fill="#111"/><rect x="2.4" y="2.4" width="11.2" height="11.2" fill="#d2d2d2" stroke="#333" stroke-width="0.9"/><path d="M0,0.2L15,15.8" stroke="#1c2a9c" stroke-width="1.5"/></g></svg>
<svg class="abs" style="left:422px;top:148px;overflow:visible" width="10" height="10" viewBox="0 0 10 10" ><g transform="translate(0,0.6)"><path d="M0.6,2.8H4.6V0.7L8.8,4.3L4.6,7.9V5.8H0.6Z" fill="#4a90dc" stroke="#1e4a8c" stroke-width="0.9" stroke-linejoin="round"/></g></svg>
<svg class="abs" style="left:458px;top:152px;overflow:visible" width="10" height="10" viewBox="0 0 10 10" ><g transform="translate(0.4,0)"><circle cx="4.4" cy="4.4" r="3.8" fill="#f4f6fa" stroke="#9aa4b4" stroke-width="0.9"/><rect x="2.2" y="3.9" width="4.4" height="1" fill="#555"/></g></svg>
<svg class="abs" style="left:710px;top:258px;overflow:visible" width="37" height="4" viewBox="0 0 37 4" ><g transform="translate(0.5,0.2)"><path d="M0.0,0.3 L1.5,2.1 L3.0,0.3 L4.5,2.1 L6.0,0.3 L7.5,2.1 L9.0,0.3 L10.5,2.1 L12.0,0.3 L13.5,2.1 L15.0,0.3 L16.5,2.1 L18.0,0.3 L19.5,2.1 L21.0,0.3 L22.5,2.1 L24.0,0.3 L25.5,2.1 L27.0,0.3 L28.5,2.1 L30.0,0.3 L31.5,2.1 L33.0,0.3 L34.5,2.1 L36.0,0.3" fill="none" stroke="#e8a060" stroke-width="0.8"/></g></svg>
<svg class="abs" style="left:427px;top:465px;overflow:visible" width="15" height="15" viewBox="0 0 15 15" ><g transform="translate(0.6,0.8)"><rect x="0.8" y="0.8" width="12.2" height="9" rx="1.2" fill="#fdfdff" stroke="#3c68b4" stroke-width="1.5"/><rect x="3" y="3.4" width="4.6" height="1" fill="#34447c"/><rect x="3" y="5.6" width="6.6" height="1" fill="#34447c"/><path d="M5,10.4H8.8L9.4,12H4.4Z" fill="#3c68b4"/><rect x="1.8" y="12" width="10.2" height="1.3" fill="#3c68b4"/></g></svg>
<svg class="abs" style="left:522px;top:465px;overflow:visible" width="16" height="16" viewBox="0 0 16 16" ><g transform="translate(0.7,0.9)"><rect x="0" y="0" width="14.4" height="14.2" fill="#2a8af0"/><rect x="0.9" y="0.9" width="12.6" height="2.6" fill="#9cccf8"/><rect x="1.4" y="4.4" width="11.6" height="8.6" fill="#141414" stroke="#3a3a3a" stroke-width="0.6"/><path d="M3.4,7L5.4,8.6L3.4,10.2" fill="none" stroke="#38c838" stroke-width="0.9"/><rect x="7" y="7.2" width="3.2" height="2.8" fill="#38b838"/></g></svg>
<svg class="abs" style="left:968px;top:465px;overflow:visible" width="16" height="16" viewBox="0 0 16 16" ><g transform="translate(0.8,0.8)"><rect x="0" y="0" width="14.4" height="14.2" fill="#2a8af0"/><rect x="0.9" y="0.9" width="12.6" height="2.6" fill="#9cccf8"/><rect x="1.4" y="4.4" width="11.6" height="8.6" fill="#141414" stroke="#3a3a3a" stroke-width="0.6"/><path d="M3.4,7L5.4,8.6L3.4,10.2" fill="none" stroke="#38c838" stroke-width="0.9"/><rect x="7" y="7.2" width="3.2" height="2.8" fill="#38b838"/></g></svg>
<svg class="abs" style="left:644px;top:465px;overflow:visible" width="19" height="15" viewBox="0 0 19 15" ><text x="0" y="10.8" font-family="Liberation Sans,sans-serif" font-weight="bold" font-size="11.5" fill="#2c3c5c" textLength="17.4" lengthAdjust="spacingAndGlyphs">(x)=</text></svg>
<svg class="abs" style="left:744px;top:465px;overflow:visible" width="16" height="15" viewBox="0 0 16 15" ><g transform="translate(0.6,0.8)"><rect x="5" y="0.6" width="9" height="12.8" fill="#f8f8f8" stroke="#8a8a8a" stroke-width="1.1"/><path d="M5,4.6H14M5,8.6H14" stroke="#8a8a8a" stroke-width="1"/><rect x="0.4" y="0.6" width="1.1" height="1.3" fill="#777"/><rect x="0.4" y="3.2" width="1.1" height="1.3" fill="#777"/><rect x="0.4" y="6" width="1.1" height="1.3" fill="#777"/><rect x="0.4" y="8.6" width="1.1" height="1.3" fill="#777"/><rect x="2.4" y="0.6" width="1.1" height="1.3" fill="#777"/><rect x="2.4" y="3.2" width="1.1" height="1.3" fill="#777"/><rect x="2.4" y="6" width="1.1" height="1.3" fill="#777"/><rect x="2.4" y="8.6" width="1.1" height="1.3" fill="#777"/></g></svg>
<svg class="abs" style="left:840px;top:466px;overflow:visible" width="15" height="14" viewBox="0 0 15 14" ><g transform="translate(0.2,0)"><text x="0" y="5.9" font-family="Liberation Mono,monospace" font-weight="bold" font-size="7.6" fill="#111" textLength="14" lengthAdjust="spacingAndGlyphs">101</text><text x="0" y="12.5" font-family="Liberation Mono,monospace" font-weight="bold" font-size="7.6" fill="#111" textLength="14" lengthAdjust="spacingAndGlyphs">010</text></g></svg>
<svg class="abs" style="left:1137px;top:468px;overflow:visible" width="15" height="14" viewBox="0 0 15 14" ><g transform="translate(0,0.8)"><rect x="0.5" y="0.5" width="12.6" height="6.6" fill="#cfe4f6" stroke="#b8a07c" stroke-width="0.9"/><rect x="1" y="1.4" width="6.6" height="3.2" fill="#52b452"/><rect x="1" y="4.6" width="6.6" height="1.6" fill="#3c8c4c"/><circle cx="10.4" cy="8.6" r="3.5" fill="#3cae3c" stroke="#2a8430" stroke-width="0.7"/><path d="M9.2,6.6L12.4,8.6L9.2,10.6Z" fill="#fff"/></g></svg>
<svg class="abs" style="left:1233px;top:466px;overflow:visible" width="17" height="16" viewBox="0 0 17 16" ><g transform="translate(0.2,0)"><rect x="5.6" y="0.8" width="9.6" height="8" rx="0.8" fill="#e8e8e8" stroke="#333" stroke-width="1.1"/><rect x="7.2" y="2.2" width="6.4" height="4.6" fill="#1848d8"/><rect x="8" y="2.8" width="2" height="1.2" fill="#6aa0ff"/><path d="M8.6,9V10.6H12" stroke="#333" stroke-width="1" fill="none"/><path d="M1,11.6Q0.6,8.6 3.6,7.8L7.8,11.6Q7.4,14.8 4.4,14.6Q1.6,14.4 1,11.6Z" fill="#c8c8c8" stroke="#444" stroke-width="0.9"/><path d="M3.6,7.4L8.2,11.6" stroke="#e8d838" stroke-width="1.2"/></g></svg>
<svg class="abs" style="left:1327px;top:465px;overflow:visible" width="18" height="17" viewBox="0 0 18 17" ><g transform="translate(0.6,0.6)"><path d="M9.4,3.2L13.6,0.6L16.4,2L16,5.8L12.6,8.4Z" fill="#f4d484" stroke="#b08a38" stroke-width="0.8" stroke-linejoin="round"/><circle cx="13.8" cy="3.4" r="0.9" fill="#3a5a9a"/><path d="M9.4,3.2L12.6,8.4L7.6,13L3.4,9.2Z" fill="#8c8684" stroke="#6a6460" stroke-width="0.6"/><path d="M3.4,9.2L7.6,13L3,15.4L0.6,13.4Z" fill="#fdf8e4" stroke="#d8c890" stroke-width="0.6"/></g></svg>
<svg class="abs" style="left:1410px;top:465px;overflow:visible" width="17" height="17" viewBox="0 0 17 17" ><path d="M3,4.2Q2.4,1 5.6,1.2L13.4,0.6Q15.4,1 14.4,3.2L6.4,4.2L8.2,11.6Q8.4,14 5.8,14.2L1.8,14.4Q0.2,13.4 1.4,11.8L4.4,11.6Z" fill="#e4d8b0" stroke="#a8986a" stroke-width="0.9" stroke-linejoin="round"/><g stroke="#1a1a1a" stroke-width="0.9"><path d="M7.6,7.4L5.8,6.2M7.4,10.4L5.6,11.4M14.4,7.6L16,6.6M14.6,10.8L16.2,12M9.4,13.2L8.6,15M12.8,13.4L13.6,15"/></g><ellipse cx="11" cy="9.6" rx="3.8" ry="3.4" fill="#f47c1c" stroke="#b8540c" stroke-width="0.6"/><ellipse cx="10.4" cy="8.6" rx="1.8" ry="1.2" fill="#fbb070"/></svg>
<svg class="abs" style="left:434px;top:504px;overflow:visible" width="24" height="20" viewBox="0 0 24 20" ><defs><linearGradient id="gfm" x1="0" y1="0" x2="0.6" y2="1"><stop offset="0" stop-color="#3a74c4"/><stop offset="1" stop-color="#5cb45c"/></linearGradient></defs><rect x="0.5" y="0.5" width="22" height="18" rx="1.6" fill="#e4e8f0" stroke="#b4bccc"/><rect x="2.8" y="4" width="8.8" height="11.6" fill="url(#gfm)"/><rect x="13" y="4" width="4.6" height="6.6" fill="#ececec"/><rect x="13" y="11.4" width="4.6" height="4.2" fill="#ececec"/><rect x="18.8" y="4" width="1.8" height="7.2" fill="url(#gfm)"/></svg>
<svg class="abs" style="left:1200px;top:513px;overflow:visible" width="16" height="2" viewBox="0 0 16 2" ><g transform="translate(0.5,0.4)"><rect x="0" y="0" width="15" height="1.3" fill="#1a1a1a"/></g></svg>
<svg class="abs" style="left:1269px;top:507px;overflow:visible" width="16" height="16" viewBox="0 0 16 16" ><g transform="translate(0,0.6)"><rect x="0.6" y="0.6" width="13.6" height="13.6" rx="1.6" fill="none" stroke="#b8bcc0" stroke-width="1.1"/></g></svg>
<svg class="abs" style="left:1340px;top:507px;overflow:visible" width="16" height="16" viewBox="0 0 16 16" ><path d="M0.5,0.5L14.9,14.9M14.9,0.5L0.5,14.9" stroke="#1a1a1a" stroke-width="1.4" fill="none"/></svg>
<svg class="abs" style="left:583px;top:546px;overflow:visible" width="60" height="7" viewBox="0 0 60 7" ><g transform="translate(0.8,0)"><rect x="0.00" y="0" width="5.2" height="6.2" fill="#d4d4d4"/><rect x="7.38" y="0" width="5.2" height="6.2" fill="#d4d4d4"/><rect x="14.76" y="0" width="5.2" height="6.2" fill="#d4d4d4"/><rect x="22.14" y="0" width="5.2" height="6.2" fill="#d4d4d4"/><rect x="29.52" y="0" width="5.2" height="6.2" fill="#d4d4d4"/><rect x="36.90" y="0" width="5.2" height="6.2" fill="#d4d4d4"/><rect x="44.28" y="0" width="5.2" height="6.2" fill="#d4d4d4"/><rect x="51.66" y="0" width="5.2" height="6.2" fill="#d4d4d4"/></g></svg>
<svg class="abs" style="left:583px;top:567px;overflow:visible" width="60" height="7" viewBox="0 0 60 7" ><g transform="translate(0.8,0.6)"><rect x="0.00" y="0" width="5.2" height="6.2" fill="#d4d4d4"/><rect x="7.38" y="0" width="5.2" height="6.2" fill="#d4d4d4"/><rect x="14.76" y="0" width="5.2" height="6.2" fill="#d4d4d4"/><rect x="22.14" y="0" width="5.2" height="6.2" fill="#d4d4d4"/><rect x="29.52" y="0" width="5.2" height="6.2" fill="#d4d4d4"/><rect x="36.90" y="0" width="5.2" height="6.2" fill="#d4d4d4"/><rect x="44.28" y="0" width="5.2" height="6.2" fill="#d4d4d4"/><rect x="51.66" y="0" width="5.2" height="6.2" fill="#d4d4d4"/></g></svg>
<svg class="abs" style="left:879px;top:546px;overflow:visible" width="60" height="7" viewBox="0 0 60 7" ><g transform="translate(0.8,0)"><rect x="0.00" y="0" width="5.2" height="6.2" fill="#d4d4d4"/><rect x="7.38" y="0" width="5.2" height="6.2" fill="#d4d4d4"/><rect x="14.76" y="0" width="5.2" height="6.2" fill="#d4d4d4"/><rect x="22.14" y="0" width="5.2" height="6.2" fill="#d4d4d4"/><rect x="29.52" y="0" width="5.2" height="6.2" fill="#d4d4d4"/><rect x="36.90" y="0" width="5.2" height="6.2" fill="#d4d4d4"/><rect x="44.28" y="0" width="5.2" height="6.2" fill="#d4d4d4"/><rect x="51.66" y="0" width="5.2" height="6.2" fill="#d4d4d4"/></g></svg>
<svg class="abs" style="left:681px;top:563px;overflow:visible" width="84" height="11" viewBox="0 0 84 11" ><g transform="translate(0.5,0.6)"><rect x="0.00" y="0" width="9" height="9" fill="#460000"/><rect x="10.43" y="0" width="9" height="9" fill="#444400"/><rect x="20.86" y="0" width="9" height="9" fill="#402012"/><rect x="31.29" y="0" width="9" height="9" fill="#004200"/><rect x="41.72" y="0" width="9" height="9" fill="#460000"/><rect x="52.15" y="0" width="9" height="9" fill="#444400"/><rect x="62.58" y="0" width="9" height="9" fill="#402012"/><rect x="73.01" y="0" width="9" height="9" fill="#004200"/></g></svg>
<svg class="abs" style="left:879px;top:563px;overflow:visible" width="84" height="11" viewBox="0 0 84 11" ><g transform="translate(0.9,0.6)"><rect x="0.00" y="0" width="9" height="9" fill="#460000"/><rect x="10.43" y="0" width="9" height="9" fill="#444400"/><rect x="20.86" y="0" width="9" height="9" fill="#402012"/><rect x="31.29" y="0" width="9" height="9" fill="#004200"/><rect x="41.72" y="0" width="9" height="9" fill="#460000"/><rect x="52.15" y="0" width="9" height="9" fill="#444400"/><rect x="62.58" y="0" width="9" height="9" fill="#402012"/><rect x="73.01" y="0" width="9" height="9" fill="#004200"/></g></svg>
<div class="abs" style="left:1350.5px;top:560.7px;width:22.4px;height:16.6px;background:#430404"></div>
<svg class="abs" style="left:435px;top:587px;overflow:visible" width="6" height="10" viewBox="0 0 6 10" ><g transform="translate(0.4,0.6)"><path d="M0,0L5.2,4.4L0,8.8Z" fill="#22e022"/></g></svg>
<div class="abs" style="left:448px;top:590px;width:5px;height:5px;background:#d0d0d0"></div>
<svg class="abs" style="left:5px;top:515px;overflow:visible" width="394" height="90" viewBox="0 0 394 90" ><g transform="translate(0.3,0.3)"><rect x="1.25" y="1.25" width="390.70" height="86.30" fill="none" stroke="#fc0a0a" stroke-width="2.5"/></g></svg>
<svg class="abs" style="left:5px;top:533px;overflow:visible" width="13" height="9" viewBox="0 0 13 9" ><g transform="translate(0.3,0.5)"><rect x="1.1" y="1.1" width="10.00" height="6.00" fill="none" stroke="#fc0a0a" stroke-width="2.2"/></g></svg>
<svg class="abs" style="left:199px;top:570px;overflow:visible" width="144" height="25" viewBox="0 0 144 25" ><g transform="translate(0.2,0)"><rect x="1.05" y="1.05" width="141.10" height="22.70" fill="none" stroke="#fc0a0a" stroke-width="2.1"/></g></svg>
<svg class="abs" style="left:425px;top:496px;overflow:visible" width="379" height="35" viewBox="0 0 379 35" ><g transform="translate(0.5,0.2)"><rect x="1.2" y="1.2" width="375.60" height="32.00" fill="none" stroke="#fc0a0a" stroke-width="2.4"/></g></svg>
<!--/ICONS-->
</body>
</html>
